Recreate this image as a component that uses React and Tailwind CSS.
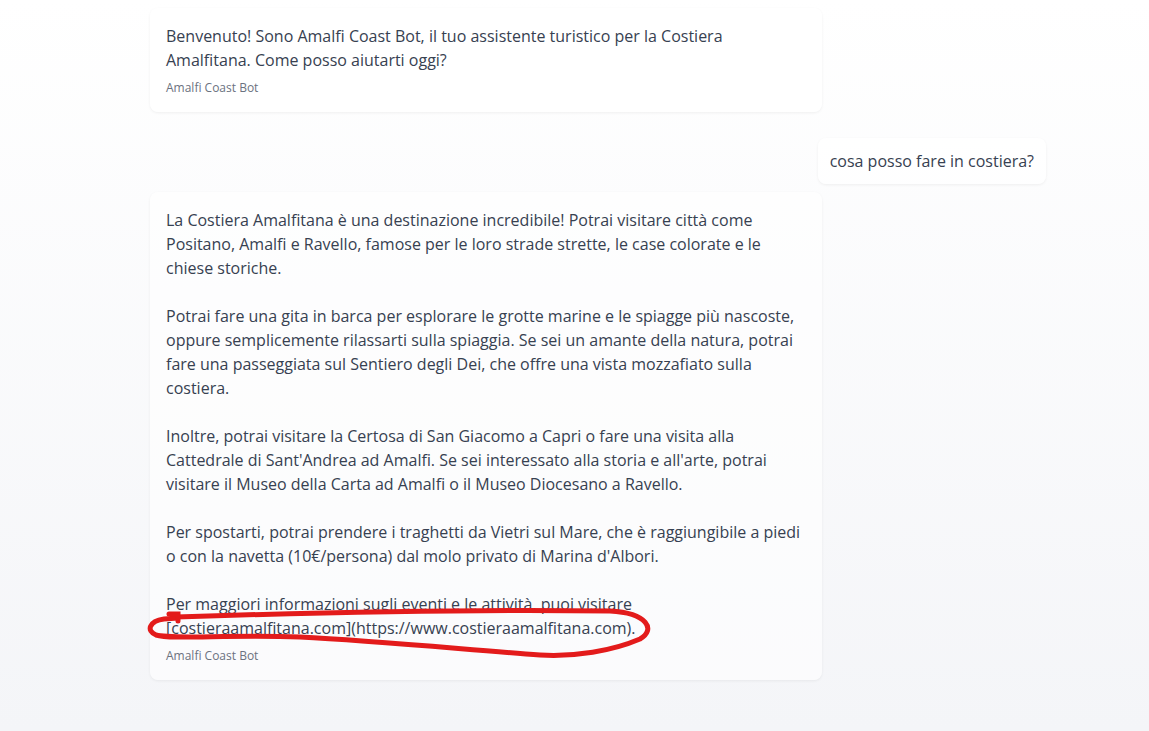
export default function App() {
  const botName = "Amalfi Coast Bot";

  return (
    <div className="relative min-h-screen bg-gradient-to-b from-white to-[#f4f5f8] font-['Open_Sans',sans-serif] text-[#374151]">
      <div className="w-[896px] ml-[150px] pt-2 flex flex-col">
        {/* Welcome message */}
        <div className="max-w-[75%] self-start bg-white/70 rounded-lg shadow-[0_1px_3px_rgba(0,0,0,0.06)] p-4">
          <p className="text-base leading-6">
            Benvenuto! Sono Amalfi Coast Bot, il tuo assistente turistico per la Costiera Amalfitana. Come posso aiutarti oggi?
          </p>
          <p className="mt-2 text-xs leading-4 text-[#6b7280]">{botName}</p>
        </div>

        {/* User message */}
        <div className="self-end mt-[26px] bg-white/70 rounded-lg shadow-[0_1px_3px_rgba(0,0,0,0.06)] px-3 py-[11px]">
          <p className="text-base leading-6">cosa posso fare in costiera?</p>
        </div>

        {/* Bot answer */}
        <div className="max-w-[75%] self-start mt-2 bg-white/60 rounded-lg shadow-[0_1px_3px_rgba(0,0,0,0.06)] p-4">
          <div className="text-base leading-6 space-y-6">
            <p>
              La Costiera Amalfitana è una destinazione incredibile! Potrai visitare città come Positano, Amalfi e Ravello, famose per le loro strade strette, le case colorate e le chiese storiche.
            </p>
            <p>
              Potrai fare una gita in barca per esplorare le grotte marine e le spiagge più nascoste, oppure semplicemente rilassarti sulla spiaggia. Se sei un amante della natura, potrai fare una passeggiata sul Sentiero degli Dei, che offre una vista mozzafiato sulla costiera.
            </p>
            <p>
              Inoltre, potrai visitare la Certosa di San Giacomo a Capri o fare una visita alla Cattedrale di Sant'Andrea ad Amalfi. Se sei interessato alla storia e all'arte, potrai visitare il Museo della Carta ad Amalfi o il Museo Diocesano a Ravello.
            </p>
            <p>
              Per spostarti, potrai prendere i traghetti da Vietri sul Mare, che è raggiungibile a piedi o con la navetta (10€/persona) dal molo privato di Marina d'Albori.
            </p>
            <p>
              Per maggiori informazioni sugli eventi e le attività, puoi visitare [costieraamalfitana.com](https://www.costieraamalfitana.com).
            </p>
          </div>
          <p className="mt-2 text-xs leading-4 text-[#6b7280]">{botName}</p>
        </div>
      </div>

      {/* hand-drawn red annotation */}
      <svg
        className="absolute inset-0 pointer-events-none"
        width="1149"
        height="731"
        viewBox="0 0 1149 731"
        fill="none"
      >
        <path
          d="M176 617 C300 613 480 609 610 611 C648 613 656 630 640 639 C612 651 575 657 540 655 C470 650 380 641 300 637 C230 634 172 640 156 635 C146 631 149 621 164 619 L178 618"
          stroke="#e31b1b"
          strokeWidth="5"
          strokeLinecap="round"
          strokeLinejoin="round"
        />
        <path d="M169 614 L178 614 L178 621" stroke="#e31b1b" strokeWidth="5" strokeLinecap="round" />
      </svg>
    </div>
  );
}
